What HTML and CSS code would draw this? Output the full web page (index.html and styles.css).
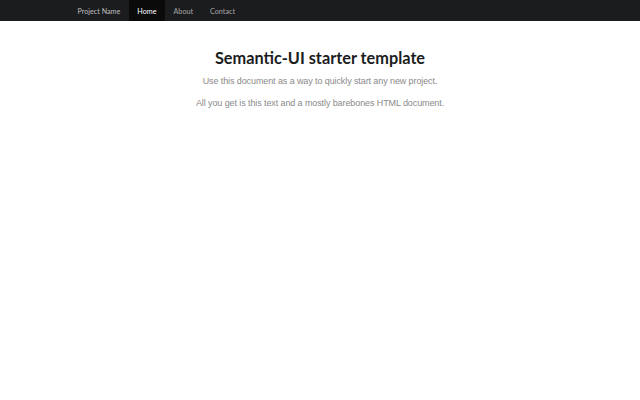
FILE: index.html
```
<!DOCTYPE html>
<html>
<head>
<meta charset="utf-8">
<link rel="stylesheet" href="styles.css">
</head>
<body>
<div class="navbar">
  <div class="container nav-inner">
    <a class="item brand">Project Name</a>
    <a class="item active">Home</a>
    <a class="item">About</a>
    <a class="item">Contact</a>
  </div>
</div>
<div class="main">
  <h1 class="title">Semantic-UI starter template</h1>
  <p class="lead">Use this document as a way to quickly start any new project.</p>
  <p class="lead">All you get is this text and a mostly barebones HTML document.</p>
</div>
</body>
</html>
```
FILE: styles.css
```
html, body { margin: 0; padding: 0; background: #fff; }
body { font-family: Lato, "Liberation Sans", sans-serif; }
.navbar { background: #1b1c1d; height: 21px; }
.container { margin-left: 69px; }
.nav-inner { display: flex; height: 21px; }
.item { display: flex; align-items: center; padding: 1px 8.5px 0; font-size: 7.2px; color: rgba(255,255,255,0.6); }
.item.brand { color: rgba(255,255,255,0.7); }
.item.active { background: #0a0a0a; color: #fff; }
.main { text-align: center; padding-top: 27px; }
.title { font-family: Lato, sans-serif; font-weight: 700; font-size: 16.3px; color: #1b1c1d; margin: 0 0 6px; line-height: 20px; }
.lead { font-family: "Liberation Sans", Arial, sans-serif; font-size: 9px; letter-spacing: -0.1px; color: #8a8a8a; margin: 0 0 8px; line-height: 14px; }
```
